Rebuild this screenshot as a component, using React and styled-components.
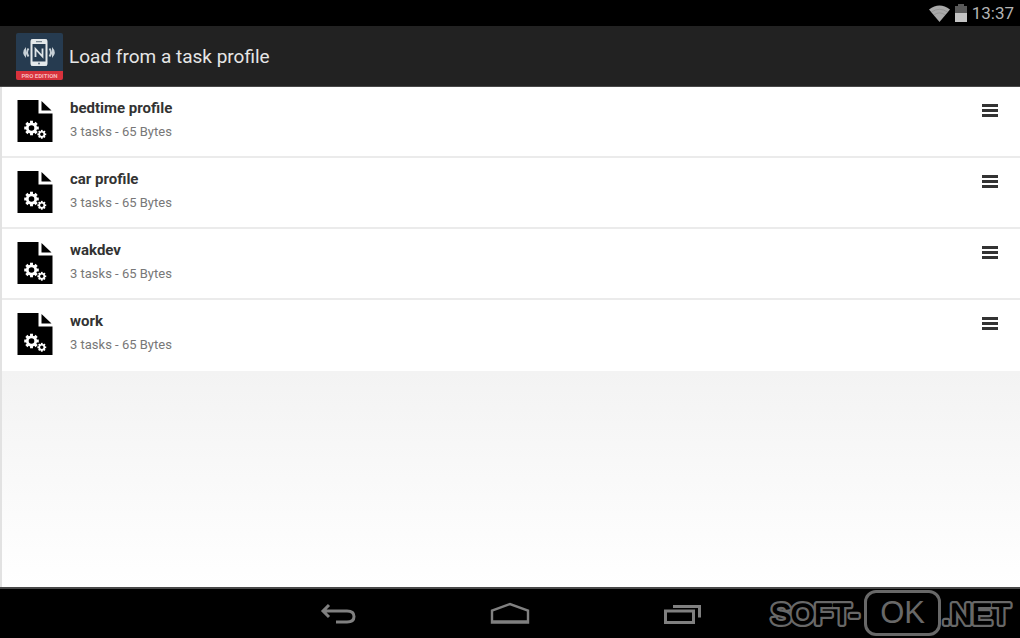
import styled, { createGlobalStyle } from "styled-components";

const GlobalStyle = createGlobalStyle`
  * {
    box-sizing: border-box;
  }

  body {
    margin: 0;
    background: #000;
    font-family: Roboto, sans-serif;
  }
`;

const Screen = styled.div`
  display: flex;
  flex-direction: column;
  min-height: 100vh;
`;

const StatusBar = styled.div`
  display: flex;
  justify-content: flex-end;
  align-items: center;
  gap: 5px;
  height: 26px;
  padding: 0 6px;
  background: #000;
  color: #b4b4b4;
`;

const Clock = styled.span`
  font-size: 17px;
  line-height: 26px;
`;

const ActionBar = styled.header`
  display: flex;
  align-items: center;
  gap: 6px;
  height: 61px;
  padding: 0 16px;
  background: #222;
  border-bottom: 1px solid #484848;
`;

const Title = styled.h1`
  margin: 0;
  padding-top: 2px;
  font-size: 19px;
  font-weight: 400;
  line-height: 28px;
  color: #e6e6e6;
`;

const Content = styled.main`
  flex: 1;
  display: flex;
  flex-direction: column;
  border-left: 2px solid #e2e2e2;
  background: #fff;
`;

const ProfileList = styled.ul`
  margin: 0;
  padding: 0;
  list-style: none;
`;

const ProfileRow = styled.li`
  display: flex;
  align-items: flex-start;
  gap: 17px;
  height: 71px;
  padding: 11px 21px 0 15px;
  border-bottom: 2px solid #ebebeb;

  &:last-child {
    border-bottom-color: #fff;
  }
`;

const ProfileText = styled.div`
  flex: 1;
`;

const ProfileName = styled.h2`
  margin: 0 0 4px;
  font-size: 15px;
  font-weight: 700;
  line-height: 20px;
  color: #333;
`;

const ProfileInfo = styled.p`
  margin: 0;
  font-size: 13px;
  line-height: 20px;
  color: #777;
`;

const IconButton = styled.button`
  display: flex;
  padding: 0;
  border: 0;
  background: none;
  cursor: pointer;
`;

const EmptyArea = styled.div`
  flex: 1;
  background: linear-gradient(#f3f3f3, #fff);
`;

const NavBar = styled.nav`
  position: relative;
  display: flex;
  justify-content: center;
  align-items: center;
  gap: 132px;
  height: 51px;
  border-top: 2px solid #484848;
  background: #000;
`;

const NavButton = styled(IconButton)`
  justify-content: center;
  width: 40px;
`;

const Watermark = styled.div`
  position: absolute;
  right: 8px;
  bottom: 2px;
  display: flex;
  align-items: center;
  font-family: "Liberation Sans", sans-serif;
  font-size: 31px;
  line-height: 46px;
  color: #686868;
`;

const OutlinedSvg = styled.svg`
  display: block;
  overflow: visible;
  fill: #000;
  stroke-linejoin: round;
`;

const Badge = styled.span`
  padding: 0 13px;
  border: 3px solid #686868;
  border-radius: 12px;
  line-height: 40px;
`;

const profiles = [
  { name: "bedtime profile", tasks: 3, size: 65 },
  { name: "car profile", tasks: 3, size: 65 },
  { name: "wakdev", tasks: 3, size: 65 },
  { name: "work", tasks: 3, size: 65 },
];

const teeth = [0, 45, 90, 135, 180, 225, 270, 315];

function WifiIcon() {
  return (
    <svg width="21" height="17" viewBox="0 0 21 17" aria-hidden="true">
      <path d="M0 4.5Q10.500-3.500 21 4.500L10.500 17Z" fill="#a9a9a9" />
      <path
        d="M2.500 7Q10.500 1.500 18.500 7M5 9.800Q10.500 6 16 9.800"
        fill="none"
        stroke="#8c8c8c"
        strokeWidth="0.7"
      />
    </svg>
  );
}

function BatteryIcon() {
  return (
    <svg width="12" height="18" viewBox="0 0 12 18" aria-hidden="true">
      <path d="M3 0H9V2H12V9H0V2H3Z" fill="#595959" />
      <path d="M0 9H12V18H0Z" fill="#c4c4c4" />
    </svg>
  );
}

function AppLogo() {
  return (
    <svg width="47" height="47" viewBox="0 0 47 47" aria-hidden="true">
      <rect width="47" height="47" rx="2" fill="#263b50" />
      <path d="M0 38H47V45Q47 47 45 47H2Q0 47 0 45Z" fill="#d8323c" />
      <rect x="15.500" y="7" width="15" height="25" rx="1.500" fill="#263b50" stroke="#e4e8ea" strokeWidth="2" />
      <path d="M15 6.500H31V11H15ZM15 28.500H31V32.500H15Z" fill="#e4e8ea" />
      <path d="M20 8.700H26" stroke="#5d6d7b" strokeWidth="1" />
      <circle cx="23" cy="30.500" r="1" fill="#5d6d7b" />
      <path d="M19.500 24V16L26.500 23.500V15.500" fill="none" stroke="#dfe4e7" strokeWidth="1.800" />
      <path
        d="M12.500 15.500Q9.500 19.500 12.500 23.500M33.500 15.500Q36.500 19.500 33.500 23.500"
        fill="none"
        stroke="#c8d0d6"
        strokeWidth="2"
      />
      <path d="M10 14Q4.500 19.500 10 25ZM36 14Q41.500 19.500 36 25Z" fill="#c8d0d6" />
      <text
        x="23.500"
        y="44.500"
        fontSize="6"
        fontWeight="700"
        textAnchor="middle"
        fill="#f6b8bb"
      >
        PRO EDITION
      </text>
    </svg>
  );
}

function Gear({ x, y, r }) {
  return (
    <g transform={`translate(${x} ${y})`}>
      {teeth.map((angle) => (
        <rect
          key={angle}
          x={-r * 0.26}
          y={-r * 1.3}
          width={r * 0.52}
          height={r * 0.6}
          fill="#fff"
          transform={`rotate(${angle})`}
        />
      ))}
      <circle r={r * 0.75} fill="none" stroke="#fff" strokeWidth={r * 0.5} />
    </g>
  );
}

function ProfileIcon() {
  return (
    <svg width="36" height="46" viewBox="0 0 36 46" aria-hidden="true">
      <path d="M0.500 2H21.500V15.500H35.500V44H0.500Z" fill="#000" />
      <path d="M24.500 3L34.500 12.500H24.500Z" fill="#000" />
      <Gear x={14.5} y={30} r={5.6} />
      <Gear x={24.8} y={36.3} r={3.4} />
    </svg>
  );
}

function MenuIcon() {
  return (
    <svg width="18" height="24" viewBox="0 0 18 24" aria-hidden="true">
      <path d="M1 7.500H17M1 12.500H17M1 17.500H17" stroke="#333" strokeWidth="3" />
    </svg>
  );
}

function BackIcon() {
  return (
    <svg width="38" height="24" viewBox="0 0 38 24" fill="none" stroke="#808080" strokeWidth="3" aria-hidden="true">
      <path d="M10 3L4 9L10 15M4 9H28Q35 9 35 14.500Q35 20 28 20H17" />
    </svg>
  );
}

function HomeIcon() {
  return (
    <svg width="40" height="24" viewBox="0 0 40 24" fill="none" stroke="#808080" strokeWidth="2.400" aria-hidden="true">
      <path d="M2 20.500V8.500L20 2L38 8.500V20.500Z" />
      <path d="M2 19.500H38" />
    </svg>
  );
}

function RecentIcon() {
  return (
    <svg width="38" height="24" viewBox="0 0 38 24" fill="none" stroke="#808080" strokeWidth="3" aria-hidden="true">
      <rect x="2.500" y="9" width="28" height="11.500" />
      <path d="M10 4.500H36.500V15.500" />
    </svg>
  );
}

// grey outline around a slightly thickened black core
function OutlinedText({ id, width, children }) {
  return (
    <OutlinedSvg width={width} height="46" viewBox={`0 0 ${width} 46`}>
      <g stroke="#686868" strokeWidth="6">
        <text id={id} x="1" y="34" fontSize="30">
          {children}
        </text>
      </g>
      <use href={`#${id}`} stroke="#000" strokeWidth="1.500" />
    </OutlinedSvg>
  );
}

export default function App() {
  return (
    <Screen>
      <GlobalStyle />
      <StatusBar>
        <WifiIcon />
        <BatteryIcon />
        <Clock>13:37</Clock>
      </StatusBar>
      <ActionBar>
        <AppLogo />
        <Title>Load from a task profile</Title>
      </ActionBar>
      <Content>
        <ProfileList>
          {profiles.map((profile) => (
            <ProfileRow key={profile.name}>
              <ProfileIcon />
              <ProfileText>
                <ProfileName>{profile.name}</ProfileName>
                <ProfileInfo>
                  {profile.tasks} tasks - {profile.size} Bytes
                </ProfileInfo>
              </ProfileText>
              <IconButton type="button" aria-label={`${profile.name} menu`}>
                <MenuIcon />
              </IconButton>
            </ProfileRow>
          ))}
        </ProfileList>
        <EmptyArea />
      </Content>
      <NavBar>
        <NavButton type="button" aria-label="Back">
          <BackIcon />
        </NavButton>
        <NavButton type="button" aria-label="Home">
          <HomeIcon />
        </NavButton>
        <NavButton type="button" aria-label="Recent apps">
          <RecentIcon />
        </NavButton>
        <Watermark>
          <OutlinedText id="mark-start" width={94}>
            SOFT-
          </OutlinedText>
          <Badge>OK</Badge>
          <OutlinedText id="mark-end" width={71}>
            .NET
          </OutlinedText>
        </Watermark>
      </NavBar>
    </Screen>
  );
}
